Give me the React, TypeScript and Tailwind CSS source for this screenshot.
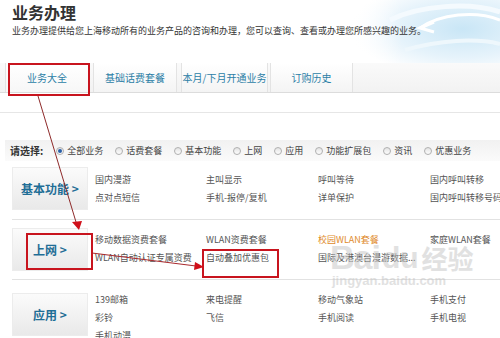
import React from "react";

const FONT = '"Noto Sans CJK SC", "Liberation Sans", sans-serif';

function Radio({ checked }: { checked?: boolean }) {
  return (
    <span className="inline-flex h-[8px] w-[8px] items-center justify-center rounded-full border border-[#b0b0b0] bg-gradient-to-b from-[#e4e4e4] to-[#fdfdfd]">
      {checked && <span className="h-[4px] w-[4px] rounded-full bg-[#2a5fa8]" />}
    </span>
  );
}

const filters = ["全部业务", "话费套餐", "基本功能", "上网", "应用", "功能扩展包", "资讯", "优惠业务"];

function CatBox({ label, mt }: { label: string; mt: string }) {
  return (
    <div
      className={`${mt} flex h-[43px] w-[76px] shrink-0 items-center justify-center whitespace-nowrap border border-[#ececec] bg-gradient-to-b from-[#fbfbfb] to-[#e9e9e9] text-[12px] font-bold text-[#1f6e96]`}
    >
      {label}
    </div>
  );
}

function Items({ rows, mt }: { rows: (string | { t: string; c: string })[][]; mt: string }) {
  return (
    <div className={`${mt} ml-[7px] flex flex-col`}>
      {rows.map((r, i) => (
        <div key={i} className="grid h-[18px] grid-cols-[111px_112px_112px_80px] items-center text-[9px] leading-[18px] text-[#555]">
          {r.map((it, j) =>
            typeof it === "string" ? (
              <span key={j} className="whitespace-nowrap">{it}</span>
            ) : (
              <span key={j} className={`whitespace-nowrap ${it.c}`}>{it.t}</span>
            )
          )}
        </div>
      ))}
    </div>
  );
}

export default function App() {
  return (
    <div className="relative h-[338px] w-[500px] overflow-hidden bg-white" style={{ fontFamily: FONT }}>
      {/* decorative swoosh */}
      <svg className="absolute right-0 top-0" width="150" height="64" viewBox="0 0 150 64">
        <defs>
          <radialGradient id="sw" cx="0.75" cy="0.45" r="0.75">
            <stop offset="0" stopColor="#c9e6f6" />
            <stop offset="0.6" stopColor="#e6f3fb" />
            <stop offset="1" stopColor="#ffffff" />
          </radialGradient>
          <linearGradient id="fade" x1="0" x2="1">
            <stop offset="0" stopColor="#fff" stopOpacity="1" />
            <stop offset="0.35" stopColor="#fff" stopOpacity="0" />
          </linearGradient>
        </defs>
        <rect x="0" y="0" width="150" height="64" fill="url(#sw)" />
        <rect x="0" y="0" width="150" height="64" fill="url(#fade)" />
        <path d="M40 20 C70 5,120 2,150 12" stroke="#f4fafe" strokeWidth="5" fill="none" />
        <path d="M70 28 C90 14,125 10,150 20" stroke="#ffffff" strokeWidth="3" fill="none" />
        <path d="M84 22 L70 28 L84 32" stroke="#ffffff" strokeWidth="3" fill="none" />
        <path d="M55 50 C90 40,125 38,150 44" stroke="#eef7fc" strokeWidth="4" fill="none" />
      </svg>

      {/* header */}
      <div className="relative pl-[12px] pt-[2px]">
        <div className="text-[16px] font-bold leading-[20px] text-[#333]">业务办理</div>
        <div className="mt-[2px] whitespace-nowrap text-[9px] leading-[14px] text-[#333]">
          业务办理提供给您上海移动所有的业务产品的咨询和办理，您可以查询、查看或办理您所感兴趣的业务。
        </div>
      </div>

      {/* tabs */}
      <div className="relative mt-[25px] flex h-[30px] items-stretch border-b border-[#dcdcdc] bg-gradient-to-b from-[#fafafa] to-[#f2f2f2] pl-[5px]">
        <div className="flex w-[85px] items-center justify-center whitespace-nowrap border-l border-r-2 border-l-[#e3e3e3] border-r-[#f3c35a] bg-gradient-to-b from-white to-[#f7f7f7] text-[10px] text-[#2b7ea6]">
          业务大全
        </div>
        <div className="ml-[3px] flex w-[84px] items-center justify-center whitespace-nowrap border-x border-[#e3e3e3] bg-gradient-to-b from-white to-[#f4f4f4] text-[10px] text-[#2b7ea6]">
          基础话费套餐
        </div>
        <div className="ml-[4px] flex w-[87px] items-center justify-center whitespace-nowrap border-x border-[#e3e3e3] bg-gradient-to-b from-white to-[#f4f4f4] text-[10px] text-[#2b7ea6]">
          本月/下月开通业务
        </div>
        <div className="ml-[2px] flex w-[83px] items-center justify-center whitespace-nowrap border-x border-[#e3e3e3] bg-gradient-to-b from-white to-[#f4f4f4] text-[10px] text-[#2b7ea6]">
          订购历史
        </div>
      </div>

      <div className="mt-[19px] h-px bg-[#e6e6e6]" />

      {/* filter bar */}
      <div className="ml-[5px] mt-[27px] flex h-[21px] items-center whitespace-nowrap bg-gradient-to-b from-[#f1f1f1] to-[#fbfbfb] pl-[5px] text-[9px] text-[#444]">
        <span className="mr-[13px] text-[10px] font-bold text-[#333]">请选择:</span>
        {filters.map((f, i) => (
          <span key={f} className="mr-[12px] flex items-center gap-[3px]">
            <Radio checked={i === 0} />
            <span>{f}</span>
          </span>
        ))}
      </div>

      {/* row 1 */}
      <div className="ml-[12px] flex h-[59px] border-b border-[#e2e2e2]">
        <CatBox label="基本功能 >" mt="mt-[6px]" />
        <Items
          mt="mt-[10px]"
          rows={[
            ["国内漫游", "主叫显示", "呼叫等待", "国内呼叫转移"],
            ["点对点短信", "手机-报停/复机", "详单保护", "国内呼叫转移号码"],
          ]}
        />
      </div>

      {/* row 2 */}
      <div className="ml-[12px] flex h-[60px] border-b border-[#e2e2e2]">
        <CatBox label="上网 >" mt="mt-[8px]" />
        <Items
          mt="mt-[11px]"
          rows={[
            ["移动数据资费套餐", "WLAN资费套餐", { t: "校园WLAN套餐", c: "text-[#e08a2a]" }, "家庭WLAN套餐"],
            ["WLAN自动认证专属资费", "自动叠加优惠包", "国际及港澳台漫游数据...", ""],
          ]}
        />
      </div>

      {/* row 3 */}
      <div className="ml-[12px] flex h-[60px]">
        <CatBox label="应用 >" mt="mt-[13px]" />
        <Items
          mt="mt-[11px]"
          rows={[
            ["139邮箱", "来电提醒", "移动气象站", "手机支付"],
            ["彩铃", "飞信", "手机阅读", "手机电视"],
            ["手机动漫", "", "", ""],
          ]}
        />
      </div>

      {/* annotations */}
      <div className="pointer-events-none absolute left-[8px] top-[63px] h-[33px] w-[82px] border-2 border-[#c8141e]" />
      <div className="pointer-events-none absolute left-[26px] top-[233px] h-[37px] w-[67px] border-2 border-[#c8141e]" />
      <div className="pointer-events-none absolute left-[202px] top-[249px] h-[29px] w-[77px] border-2 border-[#c8141e]" />

      <svg className="pointer-events-none absolute left-0 top-0" width="500" height="338">
        <line x1="38" y1="96" x2="76" y2="222" stroke="#8e2a2a" strokeWidth="1" />
        <polygon points="72,222 82,221 79,230" fill="#d0101a" />
        <line x1="92" y1="253" x2="196" y2="266" stroke="#a8282c" strokeWidth="1" />
        <polygon points="195,262 204,267 194,270" fill="#d0101a" />
      </svg>

      {/* watermark */}
      <div className="pointer-events-none absolute left-[330px] top-[240px] select-none text-[#c4c4c4] opacity-50">
        <div className="flex items-end" style={{ fontFamily: '"Liberation Sans", sans-serif' }}>
          <span className="text-[34px] font-bold leading-[34px] tracking-[-1px]">Bai</span>
          <span className="ml-[2px] text-[30px] font-bold leading-[32px]">du</span>
          <span className="ml-[3px] text-[26px] font-bold leading-[32px]" style={{ fontFamily: FONT }}>经验</span>
        </div>
        <div className="ml-[2px] text-[13px] font-bold leading-[14px]" style={{ fontFamily: '"Liberation Sans", sans-serif' }}>
          jingyan.baidu.com
        </div>
      </div>
    </div>
  );
}
